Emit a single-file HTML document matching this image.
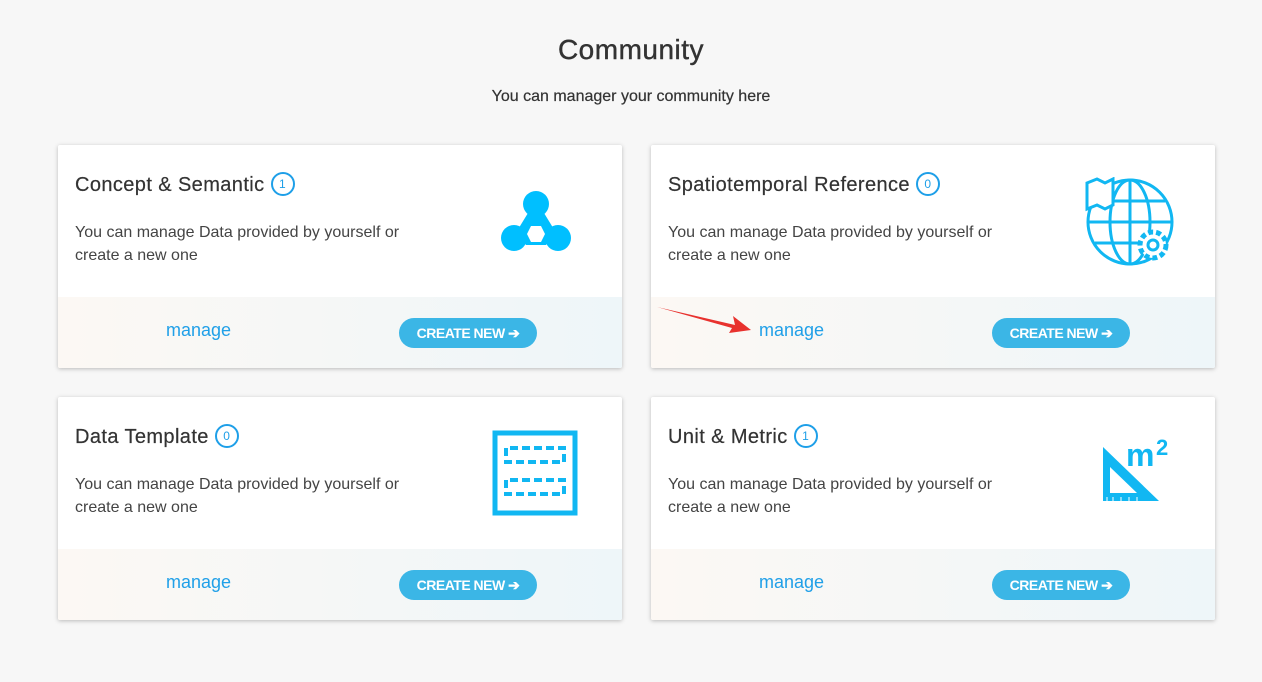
<!DOCTYPE html>
<html><head><style>
body{margin:0;width:1262px;height:682px;background:#f7f7f7;font-family:"Liberation Sans",sans-serif;position:relative;overflow:hidden;color:#333}
h1{position:absolute;top:34px;left:0;width:1262px;text-align:center;margin:0;font-size:28px;font-weight:normal;color:#333;-webkit-text-stroke:.4px #333;letter-spacing:.5px}
.sub{position:absolute;top:88px;width:1262px;text-align:center;font-size:16px;color:#333;-webkit-text-stroke:.2px #333}
.card{position:absolute;width:564px;height:223px;background:#fff;box-shadow:0 1px 4px rgba(0,0,0,.25);border-radius:2px;overflow:hidden}
.t{position:absolute;left:17px;top:27px;font-size:20px;color:#333;letter-spacing:.4px;-webkit-text-stroke:.2px #333}
.b{display:inline-block;width:20px;height:20px;border:2px solid #1e9fe8;border-radius:50%;color:#1e9fe8;font-size:12px;text-align:center;line-height:20px;vertical-align:3px;margin-left:6px;-webkit-text-stroke:0}
.d{position:absolute;left:17px;top:76px;font-size:16px;line-height:23px;color:#444;width:360px}
.f{position:absolute;left:0;top:152px;width:564px;height:71px;background:linear-gradient(90deg,#fcf8f4,#eef6f9)}
.m{position:absolute;left:108px;top:23px;font-size:18px;color:#20a0e8}
.btn{position:absolute;left:341px;top:21px;width:138px;height:30px;border-radius:15px;background:#3bb6e6;color:#fff;font-size:14px;font-weight:bold;line-height:30px;text-align:center;letter-spacing:-.5px}
.ic{position:absolute}
</style></head><body>
<h1>Community</h1>
<div class="sub">You can manager your community here</div>

<div class="card" style="left:58px;top:145px">
<div class="t">Concept &amp; Semantic<span class="b">1</span></div>
<div class="d">You can manage Data provided by yourself or create a new one</div>
<svg class="ic" style="left:440px;top:44px" width="76" height="66" viewBox="0 0 76 66"><g fill="#00bfff"><circle cx="38" cy="15" r="13"/><circle cx="16" cy="49" r="13"/><circle cx="60" cy="49" r="13"/><path d="M30 24 L46 24 L57 42 L48 56 L28 56 L19 42Z"/></g><polygon points="33,37 43,37 47,45 43,53 33,53 29,45" fill="#fff"/></svg>
<div class="f"><span class="m">manage</span><div class="btn">CREATE NEW ➔</div></div>
</div>

<div class="card" style="left:651px;top:145px">
<div class="t">Spatiotemporal Reference<span class="b">0</span></div>
<div class="d">You can manage Data provided by yourself or create a new one</div>
<svg class="ic" style="left:432px;top:32px" width="94" height="90" viewBox="0 0 94 90" fill="none" stroke="#11b7f2" stroke-width="3"><circle cx="47" cy="45" r="42"/><ellipse cx="47" cy="45" rx="20" ry="42"/><line x1="47" y1="3" x2="47" y2="87"/><line x1="5" y1="45" x2="89" y2="45"/><path d="M12 24 H82 M12 66 H82"/><path d="M4 6 L14 2 L22 6 L30 2 V28 L22 32 L14 28 L4 32Z" fill="#fff"/><circle cx="70" cy="68" r="13" fill="#fff" stroke-dasharray="5 3" stroke-width="5"/><circle cx="70" cy="68" r="5" fill="#fff"/></svg>
<div class="f"><span class="m">manage</span><div class="btn">CREATE NEW ➔</div></div>
<svg style="position:absolute;left:6px;top:158px" width="95" height="30"><polygon points="0,4 78,22 76,13 94,27 72,30 75,25" fill="#e8322e"/></svg>
</div>

<div class="card" style="left:58px;top:397px">
<div class="t">Data Template<span class="b">0</span></div>
<div class="d">You can manage Data provided by yourself or create a new one</div>
<svg class="ic" style="left:434px;top:33px" width="86" height="86" viewBox="0 0 86 86" fill="none" stroke="#11b7f2"><rect x="3" y="3" width="80" height="80" stroke-width="5"/><path d="M14 18 V32 H72 V18 Z M14 50 V64 H72 V50 Z" stroke-width="4" stroke-dasharray="8 4"/></svg>
<div class="f"><span class="m">manage</span><div class="btn">CREATE NEW ➔</div></div>
</div>

<div class="card" style="left:651px;top:397px">
<div class="t">Unit &amp; Metric<span class="b">1</span></div>
<div class="d">You can manage Data provided by yourself or create a new one</div>
<svg class="ic" style="left:450px;top:40px" width="80" height="68" viewBox="0 0 80 68"><path d="M2 10 L58 64 H2Z" fill="#11b7f2"/><path d="M9 30 L36 56 H9Z" fill="#fff"/><path d="M6 60v4M12 60v4M20 60v4M28 60v4M36 60v4" stroke="#fff"/><text x="25" y="29" font-family="Liberation Sans" font-size="32" font-weight="bold" fill="#11b7f2">m</text><text x="55" y="18" font-family="Liberation Sans" font-size="22" font-weight="bold" fill="#11b7f2">2</text></svg>
<div class="f"><span class="m">manage</span><div class="btn">CREATE NEW ➔</div></div>
</div>
</body></html>
